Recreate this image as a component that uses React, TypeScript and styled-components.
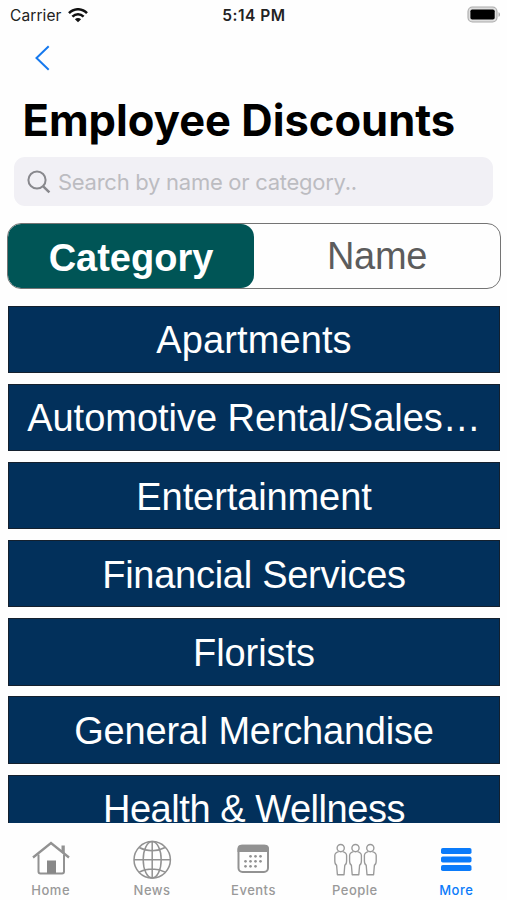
import React from 'react';
import styled, { createGlobalStyle } from 'styled-components';

const GlobalStyle = createGlobalStyle`
  * { box-sizing: border-box; }
  body { margin: 0; background: #fff; }
  button { border: 0; margin: 0; padding: 0; background: none; font: inherit; color: inherit; }
  svg { display: block; flex: none; }
`;

const Screen = styled.div`
  width: 507px;
  height: 900px;
  display: flex;
  flex-direction: column;
  overflow: hidden;
  background: #fefefe;
  font-family: Inter, sans-serif;
`;

const StatusBar = styled.header`
  flex: none;
  height: 30px;
  display: grid;
  grid-template-columns: 1fr auto 1fr;
  align-items: center;
  padding: 0 6px 0 10px;
  font-size: 15.5px;
  color: #222;
`;

const Carrier = styled.div`
  display: flex;
  align-items: center;
  gap: 6px;
  letter-spacing: 0.1px;
`;

const Clock = styled.time`
  font-weight: 600;
  letter-spacing: 0.5px;
  padding-right: 3px;
`;

const BatterySlot = styled.div`
  display: flex;
  justify-content: flex-end;
  padding-bottom: 2px;
`;

const NavBar = styled.nav`
  flex: none;
  height: 56px;
  padding: 15px 0 0 34px;
`;

const Title = styled.h1`
  flex: none;
  height: 71px;
  margin: 0;
  padding: 6px 0 0 22.5px;
  font-size: 43.5px;
  line-height: 56px;
  font-weight: 700;
  letter-spacing: 0;
  white-space: nowrap;
  color: #000;
`;

const SearchField = styled.div`
  flex: none;
  height: 49px;
  margin: 0 14px;
  padding: 0 12px 0 13px;
  display: flex;
  align-items: center;
  gap: 7px;
  border-radius: 11px;
  background: #f1f0f5;
`;

const SearchInput = styled.input`
  flex: 1;
  min-width: 0;
  height: 32px;
  padding: 1px 0 0;
  border: 0;
  outline: 0;
  background: transparent;
  font: 400 22px Inter, sans-serif;
  letter-spacing: -0.27px;
  &::placeholder { color: #bcbcc1; opacity: 1; }
`;

const Segments = styled.div`
  flex: none;
  height: 66px;
  margin: 17px 6px 0 7px;
  display: flex;
  border: 1.4px solid #747474;
  border-radius: 14px;
  overflow: hidden;
  font-family: 'Liberation Sans', Arial, sans-serif;
`;

const Segment = styled.button<{ $active?: boolean }>`
  flex: 1;
  border-radius: 13px;
  padding-top: ${(p) => (p.$active ? 4 : 1)}px;
  font-size: 38px;
  font-weight: ${(p) => (p.$active ? 700 : 400)};
  letter-spacing: ${(p) => (p.$active ? 0 : -0.3)}px;
  background: ${(p) => (p.$active ? '#005556' : 'transparent')};
  color: ${(p) => (p.$active ? '#fff' : '#5c5c5c')};
`;

const CategoryList = styled.main`
  flex: 1;
  min-height: 0;
  margin-top: 16.5px;
  padding: 0 7px 0 8px;
  display: flex;
  flex-direction: column;
  gap: 10.9px;
  overflow: hidden;
`;

const CategoryRow = styled.button<{ $tracking: number }>`
  flex: none;
  height: 67.3px;
  padding-top: 3px;
  border: 1px solid #14202e;
  background: #02305b;
  color: #fff;
  font: 400 38px 'Liberation Sans', Arial, sans-serif;
  letter-spacing: ${(p) => p.$tracking}px;
  white-space: nowrap;
`;

const TabBar = styled.nav`
  flex: none;
  height: 77px;
  display: grid;
  grid-template-columns: repeat(5, 1fr);
  background: #fefefe;
`;

const Tab = styled.button<{ $active?: boolean }>`
  display: flex;
  flex-direction: column;
  align-items: center;
  justify-content: flex-start;
  padding-top: 16px;
  font-size: 13px;
  line-height: 18px;
  font-weight: 500;
  letter-spacing: 0.5px;
  color: ${(p) => (p.$active ? '#0b7bfa' : '#999')};
`;

const WifiIcon = () => (
  <svg width="20" height="15" viewBox="0 0 20 15" fill="none" stroke="#111" strokeWidth="2.5">
    <path d="M1 5.2C6-.1 14-.1 19 5.2" />
    <path d="M4.4 8.7c3.2-3.2 8-3.2 11.2 0" />
    <path d="M10 14.2l-3.1-3c1.7-1.6 4.5-1.6 6.2 0z" fill="#111" stroke="none" />
  </svg>
);

const BatteryIcon = () => (
  <svg width="34" height="17" viewBox="0 0 34 17">
    <rect x="1" y="1" width="29" height="15" rx="4.5" fill="#dedede" stroke="#aaa" strokeWidth="1.1" />
    <rect x="3.4" y="3.5" width="24.3" height="10" rx="1.8" fill="#000" />
    <path d="M31.5 6.2c2 .6 2 4 0 4.6z" fill="#aaa" />
  </svg>
);

const BackIcon = () => (
  <svg width="16" height="26" viewBox="0 0 16 26" fill="none" stroke="#1679ee" strokeWidth="2">
    <path d="M14.7 1.3 2.5 13l12.2 11.7" />
  </svg>
);

const SearchIcon = () => (
  <svg width="24" height="24" viewBox="0 0 24 24" fill="none" stroke="#88888d" strokeWidth="2">
    <circle cx="10" cy="10" r="8.6" />
    <path d="m16.2 16.3 6.2 6" strokeWidth="2.5" />
  </svg>
);

const HomeIcon = () => (
  <svg width="40" height="42" viewBox="0 0 40 42" fill="none" stroke="#929292" strokeWidth="2">
    <path d="M2 18.5 20 4l18 14.5" strokeWidth="2.3" />
    <path d="M7.5 15.5v17q0 2 2 2H31q2 0 2-2v-17" />
    <path d="M30.5 6.5h3.3V16l-3.3-3z" fill="#929292" stroke="none" />
    <path d="M16 21.5h9v13h-9z" fill="#888" stroke="none" />
  </svg>
);

const GlobeIcon = () => (
  <svg width="40" height="42" viewBox="0 0 40 42" fill="none" stroke="#929292" strokeWidth="1.5">
    <circle cx="20.2" cy="20.8" r="18.2" />
    <ellipse cx="20.2" cy="20.8" rx="9" ry="18.2" />
    <path d="M20.2 2.6V39M2 20.8h36.4M7.2 8.5c8 4.2 18 4.2 26 0M7.2 33.1c8-4.2 18-4.2 26 0" />
  </svg>
);

const calendarDots = [
  [17.5, 17.3], [22.5, 17.3], [27.5, 17.3],
  [12.5, 22.3], [17.5, 22.3], [22.5, 22.3], [27.5, 22.3],
  [12.5, 27.3], [17.5, 27.3], [22.5, 27.3],
];

const CalendarIcon = () => (
  <svg width="40" height="42" viewBox="0 0 40 42">
    <rect x="5.5" y="6.7" width="29.5" height="26.3" rx="4" fill="#fefefe" stroke="#929292" strokeWidth="2" />
    <path d="M4.5 13V9.8q0-4 4-4H32q4 0 4 4V13z" fill="#929292" />
    <g fill="#929292">
      {calendarDots.map(([x, y]) => (
        <circle key={`${x}-${y}`} cx={x} cy={y} r="1.35" />
      ))}
    </g>
  </svg>
);

const PeopleIcon = () => (
  <svg width="46" height="42" viewBox="0 0 46 42" fill="none" stroke="#999" strokeWidth="1.35" strokeLinejoin="round">
    {[2.2, 17, 31.8].map((x) => (
      <g key={x} transform={`translate(${x} 4.5)`}>
        <circle cx="6.5" cy="4.6" r="3.6" />
        <path d="M4.5 8.2Q.7 9.200.6 12v5.500q.1 3.500 1.800 4.200l.8 9.500h6.600l.8-9.500q1.700-.7 1.800-4.200V12Q12.300 9.200 8.500 8.200" />
      </g>
    ))}
  </svg>
);

const MoreIcon = () => (
  <svg width="40" height="42" viewBox="0 0 40 42" fill="#0b7bfa">
    <rect x="5" y="9" width="30.5" height="6" rx="1.8" />
    <rect x="5" y="17.5" width="30.5" height="6" rx="1.8" />
    <rect x="5" y="26" width="30.5" height="6" rx="1.8" />
  </svg>
);

const categories = [
  { name: 'Apartments', tracking: 0.1 },
  { name: 'Automotive Rental/Sales…', tracking: -0.02 },
  { name: 'Entertainment', tracking: -0.1 },
  { name: 'Financial Services', tracking: -0.27 },
  { name: 'Florists', tracking: -0.05 },
  { name: 'General Merchandise', tracking: -0.2 },
  { name: 'Health & Wellness', tracking: -0.45 },
];

const tabs = [
  { label: 'Home', Icon: HomeIcon },
  { label: 'News', Icon: GlobeIcon },
  { label: 'Events', Icon: CalendarIcon },
  { label: 'People', Icon: PeopleIcon },
  { label: 'More', Icon: MoreIcon, active: true },
];

export default function App() {
  return (
    <>
      <GlobalStyle />
      <Screen>
        <StatusBar>
          <Carrier>Carrier <WifiIcon /></Carrier>
          <Clock>5:14 PM</Clock>
          <BatterySlot><BatteryIcon /></BatterySlot>
        </StatusBar>
        <NavBar><button aria-label="Back"><BackIcon /></button></NavBar>
        <Title>Employee Discounts</Title>
        <SearchField>
          <SearchIcon />
          <SearchInput placeholder="Search by name or category.." />
        </SearchField>
        <Segments>
          <Segment $active>Category</Segment>
          <Segment>Name</Segment>
        </Segments>
        <CategoryList>
          {categories.map((c) => (
            <CategoryRow key={c.name} $tracking={c.tracking}>{c.name}</CategoryRow>
          ))}
        </CategoryList>
        <TabBar>
          {tabs.map(({ label, Icon, active }) => (
            <Tab key={label} $active={active}><Icon />{label}</Tab>
          ))}
        </TabBar>
      </Screen>
    </>
  );
}
